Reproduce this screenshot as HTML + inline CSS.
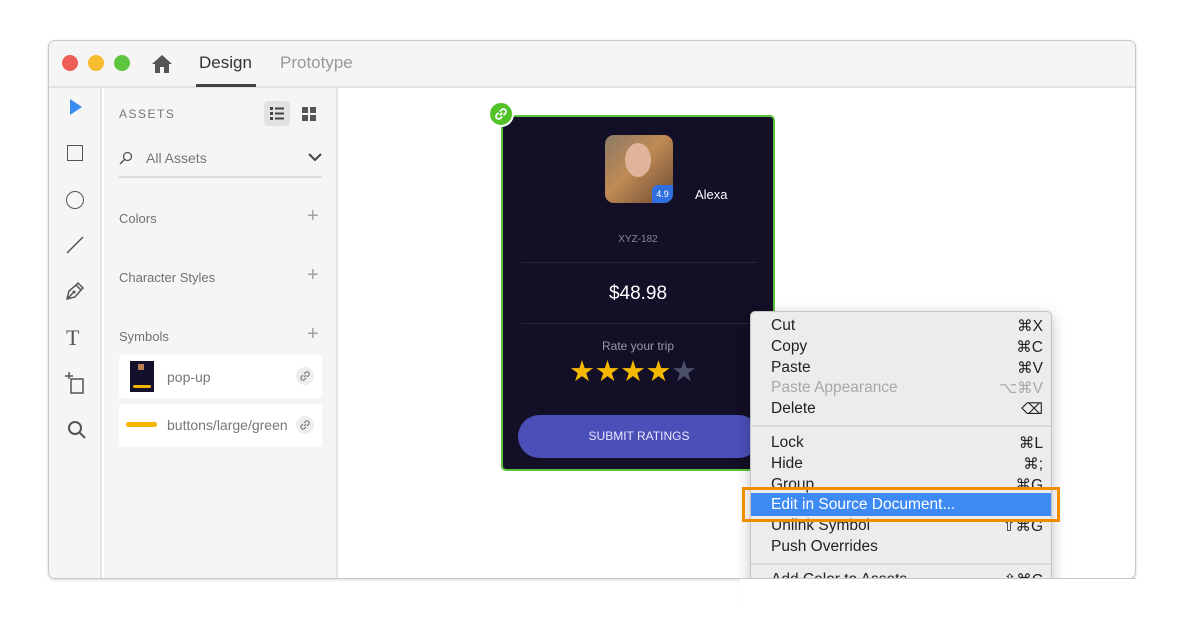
<!DOCTYPE html>
<html><head><style>
*{box-sizing:border-box;margin:0;padding:0}
body{width:1184px;height:620px;background:#fff;font-family:"Liberation Sans",sans-serif;position:relative;overflow:hidden}
.win{position:absolute;left:48px;top:40px;width:1088px;height:539px;border:1px solid #c8c8c8;border-radius:7px;overflow:hidden;background:#fff;box-shadow:0 1px 3px rgba(0,0,0,.15)}
.title{position:absolute;left:0;top:0;width:100%;height:47px;background:#f5f5f5;border-bottom:2px solid #e3e3e3}
.dot{position:absolute;top:14px;width:16px;height:16px;border-radius:50%}
.a{position:absolute}
.tools{position:absolute;left:0;top:47px;width:53px;height:500px;background:#f5f5f5;border-right:2px solid #e3e3e3}
.assets{position:absolute;left:55px;top:47px;width:234px;height:500px;background:#f5f5f5;border-right:2px solid #e3e3e3}
.lbl{position:absolute;left:15px;font-size:13px;color:#707070}
.plus{position:absolute;left:203px;font-size:20px;color:#a0a0a0;font-weight:300}
.sym{position:absolute;left:15px;width:203px;height:43px;background:#fff;border-radius:3px}
.menu{position:absolute;left:750px;top:311px;width:302px;height:290px;background:#ececec;border:1px solid #c4c4c4;border-radius:5px;box-shadow:0 4px 14px rgba(0,0,0,.25);font-size:15.5px;color:#222}
.mi{position:absolute;left:20px}
.sc{position:absolute;right:8px}
.sep{position:absolute;left:0;width:100%;height:2px;background:#dadada}
.lk{position:absolute;left:177px;top:12px;width:18px;height:18px;border-radius:50%;background:#eee}
</style></head><body>
<div class="win">
 <div class="title">
  <div class="dot" style="left:13px;background:#ed5e56"></div>
  <div class="dot" style="left:39px;background:#f6be2f"></div>
  <div class="dot" style="left:65px;background:#5ec541"></div>
  <svg class="a" style="left:102px;top:13px" width="22" height="20" viewBox="0 0 22 20"><path d="M11 1 L1 10 H4 V19 H9 V13 H13 V19 H18 V10 H21 Z" fill="#555"/></svg>
  <div class="a" style="left:150px;top:12px;font-size:17px;color:#333">Design</div>
  <div class="a" style="left:147px;top:43px;width:60px;height:3px;background:#444"></div>
  <div class="a" style="left:231px;top:12px;font-size:17px;color:#999">Prototype</div>
 </div>
 <div class="tools">
  <svg class="a" style="left:20px;top:10px" width="14" height="18"><path d="M1 1 L13 9 L1 17Z" fill="#3b8cf0"/></svg>
  <div class="a" style="left:18px;top:57px;width:16px;height:16px;border:1.5px solid #555"></div>
  <div class="a" style="left:17px;top:103px;width:18px;height:18px;border:1.5px solid #555;border-radius:50%"></div>
  <svg class="a" style="left:17px;top:148px" width="18" height="18"><path d="M1 17 L17 1" stroke="#555" stroke-width="1.5"/></svg>
  <svg class="a" style="left:16px;top:193px" width="20" height="20" viewBox="0 0 20 20"><path d="M2 18 L4 10 L11 4 L16 9 L10 16 Z M2 18 L8 12 M11 4 L13 2 L18 7 L16 9" fill="none" stroke="#555" stroke-width="1.5"/><circle cx="9" cy="11" r="1.5" fill="#555"/></svg>
  <div class="a" style="left:17px;top:237px;font-size:22px;color:#555;font-family:'Liberation Serif',serif">T</div>
  <svg class="a" style="left:14px;top:283px" width="24" height="24"><path d="M8 8 H20 V22 H8 Z" fill="none" stroke="#555" stroke-width="1.5"/><path d="M6 1 V8 M2 5 H10" stroke="#555" stroke-width="1.5"/></svg>
  <svg class="a" style="left:18px;top:332px" width="20" height="20"><circle cx="8" cy="8" r="6" fill="none" stroke="#555" stroke-width="2"/><path d="M12.5 12.5 L18 18" stroke="#555" stroke-width="2"/></svg>
 </div>
 <div class="assets">
  <div class="a" style="left:15px;top:19px;font-size:12px;letter-spacing:1.5px;color:#777">ASSETS</div>
  <div class="a" style="left:160px;top:13px;width:26px;height:25px;background:#e2e2e2;border-radius:4px"></div>
  <svg class="a" style="left:166px;top:19px" width="14" height="13"><g fill="#444"><rect x="0" y="0" width="3" height="3"/><rect x="5" y="0.5" width="9" height="2"/><rect x="0" y="5" width="3" height="3"/><rect x="5" y="5.5" width="9" height="2"/><rect x="0" y="10" width="3" height="3"/><rect x="5" y="10.5" width="9" height="2"/></g></svg>
  <svg class="a" style="left:198px;top:19px" width="14" height="14"><g fill="#555"><rect x="0" y="0" width="6" height="6"/><rect x="8" y="0" width="6" height="6"/><rect x="0" y="8" width="6" height="6"/><rect x="8" y="8" width="6" height="6"/></g></svg>
  <svg class="a" style="left:15px;top:63px" width="14" height="14"><circle cx="8.5" cy="5.5" r="4" fill="none" stroke="#555" stroke-width="1.3"/><path d="M5.5 8.5 L1 13" stroke="#555" stroke-width="1.5"/></svg>
  <div class="a" style="left:42px;top:62px;font-size:14px;color:#777">All Assets</div>
  <svg class="a" style="left:204px;top:65px" width="14" height="9"><path d="M1 1 L7 7 L13 1" fill="none" stroke="#444" stroke-width="2"/></svg>
  <div class="a" style="left:15px;top:88px;width:203px;height:2px;background:#dcdcdc"></div>
  <div class="lbl" style="top:123px">Colors</div><div class="plus" style="top:117px">+</div>
  <div class="lbl" style="top:182px">Character Styles</div><div class="plus" style="top:176px">+</div>
  <div class="lbl" style="top:241px">Symbols</div><div class="plus" style="top:235px">+</div>
  <div class="sym" style="top:267px">
   <div class="a" style="left:11px;top:6px;width:24px;height:31px;background:#12102a"><div class="a" style="left:3px;top:24px;width:18px;height:3px;background:#f4b400;border-radius:2px"></div><div class="a" style="left:8px;top:3px;width:6px;height:6px;background:#b88050"></div></div>
   <div class="a" style="left:48px;top:14px;font-size:14px;color:#777">pop-up</div>
   <div class="lk"><svg width="18" height="18" viewBox="0 0 18 18"><path d="M8 10 L10 8 M7 8 L5.5 9.5 A2 2 0 0 0 8.5 12.5 L10 11 M11 10 L12.5 8.5 A2 2 0 0 0 9.5 5.5 L8 7" fill="none" stroke="#777" stroke-width="1.2"/></svg></div>
  </div>
  <div class="sym" style="top:316px">
   <div class="a" style="left:7px;top:18px;width:31px;height:5px;background:#f4b400;border-radius:3px"></div>
   <div class="a" style="left:48px;top:13px;font-size:14px;color:#777">buttons/large/green</div>
   <div class="lk"><svg width="18" height="18" viewBox="0 0 18 18"><path d="M8 10 L10 8 M7 8 L5.5 9.5 A2 2 0 0 0 8.5 12.5 L10 11 M11 10 L12.5 8.5 A2 2 0 0 0 9.5 5.5 L8 7" fill="none" stroke="#777" stroke-width="1.2"/></svg></div>
  </div>
 </div>
</div>
<!-- card -->
<div class="a" style="left:501px;top:115px;width:274px;height:356px;background:#120f26;border:2px solid #5bc13c;border-radius:5px">
 <div class="a" style="left:102px;top:18px;width:68px;height:68px;border-radius:9px;background:linear-gradient(135deg,#8a7a66,#c08a55 45%,#6a4a30);overflow:hidden"><div class="a" style="left:20px;top:8px;width:26px;height:34px;border-radius:50%;background:#e0b49a"></div><div class="a" style="right:0;bottom:0;width:21px;height:18px;background:#2f6fe0;border-top-left-radius:6px;color:#fff;font-size:9px;text-align:center;line-height:18px">4.9</div></div>
 <div class="a" style="left:192px;top:70px;color:#fff;font-size:13px">Alexa</div>
 <div class="a" style="left:0;width:100%;top:117px;text-align:center;color:#8a8896;font-size:10px">XYZ-182</div>
 <div class="a" style="left:18px;top:145px;width:236px;height:1px;background:#26233a"></div>
 <div class="a" style="left:0;width:100%;top:166px;text-align:center;color:#fff;font-size:19px">$48.98</div>
 <div class="a" style="left:18px;top:206px;width:236px;height:1px;background:#26233a"></div>
 <div class="a" style="left:0;width:100%;top:222px;text-align:center;color:#9a98a6;font-size:12px">Rate your trip</div>
 <div class="a" style="left:66px;top:237px;font-size:29px;letter-spacing:-0.5px;color:#f5b800">★★★★<span style="color:#4a5068">★</span></div>
 <div class="a" style="left:15px;top:298px;width:242px;height:43px;border-radius:22px;background:#4a50b8;color:#e8e8ff;font-size:12px;text-align:center;line-height:43px">SUBMIT RATINGS</div>
</div>
<div class="a" style="left:488px;top:101px;width:26px;height:26px;border-radius:50%;background:#52c228;border:2px solid #fff"><svg width="22" height="22" viewBox="0 0 18 18"><path d="M8 10 L10 8 M7 8 L5.5 9.5 A2 2 0 0 0 8.5 12.5 L10 11 M11 10 L12.5 8.5 A2 2 0 0 0 9.5 5.5 L8 7" fill="none" stroke="#fff" stroke-width="1.4"/></svg></div>
<!-- menu -->
<div class="menu">
 <div class="mi" style="top:5px">Cut</div><div class="sc" style="top:5px">⌘X</div>
 <div class="mi" style="top:26px">Copy</div><div class="sc" style="top:26px">⌘C</div>
 <div class="mi" style="top:47px">Paste</div><div class="sc" style="top:47px">⌘V</div>
 <div class="mi" style="top:67px;color:#a8a8a8">Paste Appearance</div><div class="sc" style="top:67px;color:#a8a8a8">⌥⌘V</div>
 <div class="mi" style="top:88px">Delete</div><div class="sc" style="top:88px">⌫</div>
 <div class="sep" style="top:113px"></div>
 <div class="mi" style="top:122px">Lock</div><div class="sc" style="top:122px">⌘L</div>
 <div class="mi" style="top:143px">Hide</div><div class="sc" style="top:143px">⌘;</div>
 <div class="mi" style="top:164px">Group</div><div class="sc" style="top:164px">⌘G</div>
 <div class="mi" style="top:205px">Unlink Symbol</div><div class="sc" style="top:205px">⇧⌘G</div>
 <div class="a" style="left:0;top:181px;width:300px;height:23px;background:#3d8af5"></div>
 <div class="mi" style="top:184px;color:#fff">Edit in Source Document...</div>
 <div class="mi" style="top:226px">Push Overrides</div>
 <div class="sep" style="top:251px"></div>
 <div class="mi" style="top:259px">Add Color to Assets</div><div class="sc" style="top:259px">⇧⌘C</div>
</div>
<div class="a" style="left:742px;top:487px;width:318px;height:35px;border:3px solid #f08c00"></div>
<div class="a" style="left:740px;top:579px;width:420px;height:41px;background:#fff"></div>
<div class="a" style="left:740px;top:578px;width:396px;height:1px;background:#c8c8c8"></div>
</body></html>
